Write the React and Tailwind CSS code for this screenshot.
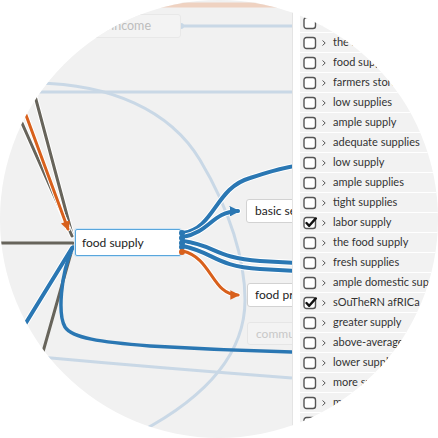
import React from 'react';

// Edge colours used in the graph.
const BLUE = '#2a77b3';
const ORANGE = '#d8601c';
const GRAY = '#67645b';
const FAINT = '#c9d8e6';

const TERMS = [
  { label: 'supply' },
  { label: 'the supply' },
  { label: 'food supplies' },
  { label: 'farmers stores' },
  { label: 'low supplies' },
  { label: 'ample supply' },
  { label: 'adequate supplies' },
  { label: 'low supply' },
  { label: 'ample supplies' },
  { label: 'tight supplies' },
  { label: 'labor supply', checked: true },
  { label: 'the food supply' },
  { label: 'fresh supplies' },
  { label: 'ample domestic supplies' },
  { label: 'sOuTheRN afRICa supply', checked: true },
  { label: 'greater supply' },
  { label: 'above-average supplies' },
  { label: 'lower supplies' },
  { label: 'more supplies' },
  { label: 'more supply' },
  { label: 'supplies' },
  { label: 'supply' },
];

function Edges() {
  return (
    <svg className="absolute inset-0" width="292" height="438" viewBox="0 0 292 438">
      <defs>
        <marker id="ab" viewBox="0 0 10 10" refX="8" refY="5" markerWidth="2.6" markerHeight="2.6" orient="auto">
          <path d="M0 0 L10 5 L0 10 z" fill={BLUE} />
        </marker>
        <marker id="ao" viewBox="0 0 10 10" refX="8" refY="5" markerWidth="3.2" markerHeight="3.2" orient="auto">
          <path d="M0 0 L10 5 L0 10 z" fill={ORANGE} />
        </marker>
      </defs>

      {/* faded background edges */}
      <path d="M150 5 L292 5" stroke="#efd2c1" strokeWidth="5" fill="none" />
      <path d="M181 26 L292 26" stroke={FAINT} strokeWidth="3" fill="none" />
      <circle cx="181" cy="26" r="3" fill={FAINT} />
      <path d="M30 92 L292 92" stroke={FAINT} strokeWidth="3" fill="none" />
      <path d="M36 83 C110 84, 170 110, 200 160 C230 210, 245 260, 245 300 C245 350, 210 395, 140 432" stroke={FAINT} strokeWidth="3" fill="none" />
      <path d="M40 357 Q160 368 292 378" stroke={FAINT} strokeWidth="3" fill="none" />

      {/* incoming edges */}
      <g fill="none" strokeLinecap="round">
        <path d="M20 40 L72 234" stroke="#fff" strokeWidth="5" />
        <path d="M20 40 L72 234" stroke={GRAY} strokeWidth="3" />
        <path d="M-6 60 L72 236" stroke="#fff" strokeWidth="5" />
        <path d="M-6 60 L72 236" stroke={GRAY} strokeWidth="3" />
        <path d="M2 50 L68 229" stroke="#fff" strokeWidth="5" />
        <path d="M2 50 L68 229" stroke={ORANGE} strokeWidth="3" markerEnd="url(#ao)" />
        <path d="M-5 243 L73 243" stroke={GRAY} strokeWidth="3" />
        <path d="M35 380 L73 246" stroke={GRAY} strokeWidth="3" />
        <path d="M8 352 L72 248" stroke="#fff" strokeWidth="6" />
        <path d="M8 352 L72 248" stroke={BLUE} strokeWidth="4" />
        <path d="M73 247 C60 275, 58 315, 65 327 C72 338, 100 342, 150 346 C200 349, 250 351, 295 352" stroke={BLUE} strokeWidth="3.5" />
      </g>

      {/* outgoing edges */}
      <g fill="none" strokeLinecap="round">
        <path d="M183 233 C215 228, 215 188, 250 178 C265 173, 280 168, 295 166" stroke="#fff" strokeWidth="6" />
        <path d="M183 233 C215 228, 215 188, 250 178 C265 173, 280 168, 295 166" stroke={BLUE} strokeWidth="4" />
        <path d="M183 237 C210 232, 212 212, 238 211" stroke="#fff" strokeWidth="6" />
        <path d="M183 237 C210 232, 212 212, 238 211" stroke={BLUE} strokeWidth="4" markerEnd="url(#ab)" />
        <path d="M183 241 C215 245, 215 258, 260 261 L295 263" stroke="#fff" strokeWidth="6" />
        <path d="M183 241 C215 245, 215 258, 260 261 L295 263" stroke={BLUE} strokeWidth="4" />
        <path d="M183 246 C215 253, 215 266, 260 269 L295 271" stroke="#fff" strokeWidth="6" />
        <path d="M183 246 C215 253, 215 266, 260 269 L295 271" stroke={BLUE} strokeWidth="4" />
        <path d="M183 251 C212 258, 212 295, 238 295" stroke="#fff" strokeWidth="5" />
        <path d="M183 251 C212 258, 212 295, 238 295" stroke={ORANGE} strokeWidth="3" markerEnd="url(#ao)" />
      </g>
    </svg>
  );
}

function Checkbox({ checked }) {
  return (
    <svg width="14" height="14" viewBox="0 0 14 14" className="shrink-0">
      <rect x="1" y="1.5" width="11.5" height="11" rx="2.5" fill="#fff" stroke="#555" strokeWidth="1.4" />
      {checked && <path d="M3.5 7 L6.2 9.8 L12.8 2.4" fill="none" stroke="#111" strokeWidth="2.4" strokeLinecap="round" strokeLinejoin="round" />}
    </svg>
  );
}

function TermRow({ label, checked }) {
  return (
    <div className="h-[20px] flex items-center gap-[4px] pl-[3px] bg-[#f2f2f2] border-b border-white whitespace-nowrap">
      <Checkbox checked={checked} />
      <svg width="6" height="8" viewBox="0 0 6 8" className="shrink-0">
        <path d="M1.5 1.5 L4.2 4 L1.5 6.5" fill="none" stroke="#555" strokeWidth="1" />
      </svg>
      <span className="text-[11px] text-[#333] ml-[2px]">{label}</span>
    </div>
  );
}

export default function App() {
  return (
    <div className="w-[438px] h-[438px] bg-white" style={{ fontFamily: 'Lato, "Open Sans", sans-serif' }}>
      <div className="w-[438px] h-[438px] rounded-full overflow-hidden flex">
        {/* graph canvas */}
        <div className="relative w-[292px] h-full overflow-hidden bg-[#f1f1f1] shrink-0">
          <Edges />

          <div className="absolute left-[55px] top-[14px] w-[126px] h-[24px] flex items-center justify-end pr-[29px] rounded-[3px] border border-[#e8e8e8] bg-[#f3f3f3] text-[12.5px] text-[#bdbdbd]">
            lower income
          </div>

          <div className="absolute left-[75px] top-[229px] w-[106px] h-[27px] flex items-center pl-[6px] rounded-[2px] border border-[#59a6dc] ring-1 ring-[#cfe5f5] bg-white text-[12px] text-[#222]">
            food supply
          </div>
          {/* ports */}
          <span className="absolute left-[179px] top-[230px] w-[6px] h-[6px] rounded-full bg-[#2a77b3]" />
          <span className="absolute left-[179px] top-[235px] w-[6px] h-[6px] rounded-full bg-[#2a77b3]" />
          <span className="absolute left-[179px] top-[240px] w-[6px] h-[6px] rounded-full bg-[#2a77b3]" />
          <span className="absolute left-[179px] top-[244px] w-[6px] h-[6px] rounded-full bg-[#2a77b3]" />
          <span className="absolute left-[179px] top-[249px] w-[6px] h-[6px] rounded-full bg-[#d8601c]" />

          <div className="absolute left-[246px] top-[199px] w-[90px] h-[24px] flex items-center pl-[8px] rounded-[3px] border border-[#d2d2d2] bg-white text-[12px] text-[#222] whitespace-nowrap">
            basic services
          </div>
          <div className="absolute left-[247px] top-[283px] w-[90px] h-[24px] flex items-center pl-[7px] rounded-[3px] border border-[#d2d2d2] bg-white text-[12px] text-[#222] whitespace-nowrap">
            food prices
          </div>
          <div className="absolute left-[247px] top-[322px] w-[90px] h-[23px] flex items-center pl-[8px] rounded-[3px] border border-[#e6e6e6] bg-[#f3f3f3] text-[12px] text-[#c8c8c8] whitespace-nowrap">
            community
          </div>
        </div>

        {/* term list */}
        <div className="flex-1 h-full bg-white border-l border-[#e4e4e4] shadow-[-2px_0_4px_rgba(0,0,0,0.06)] pl-[7px] pt-[13px] overflow-hidden">
          {TERMS.map((t, i) => (
            <TermRow key={i} label={t.label} checked={t.checked} />
          ))}
        </div>
      </div>
    </div>
  );
}
